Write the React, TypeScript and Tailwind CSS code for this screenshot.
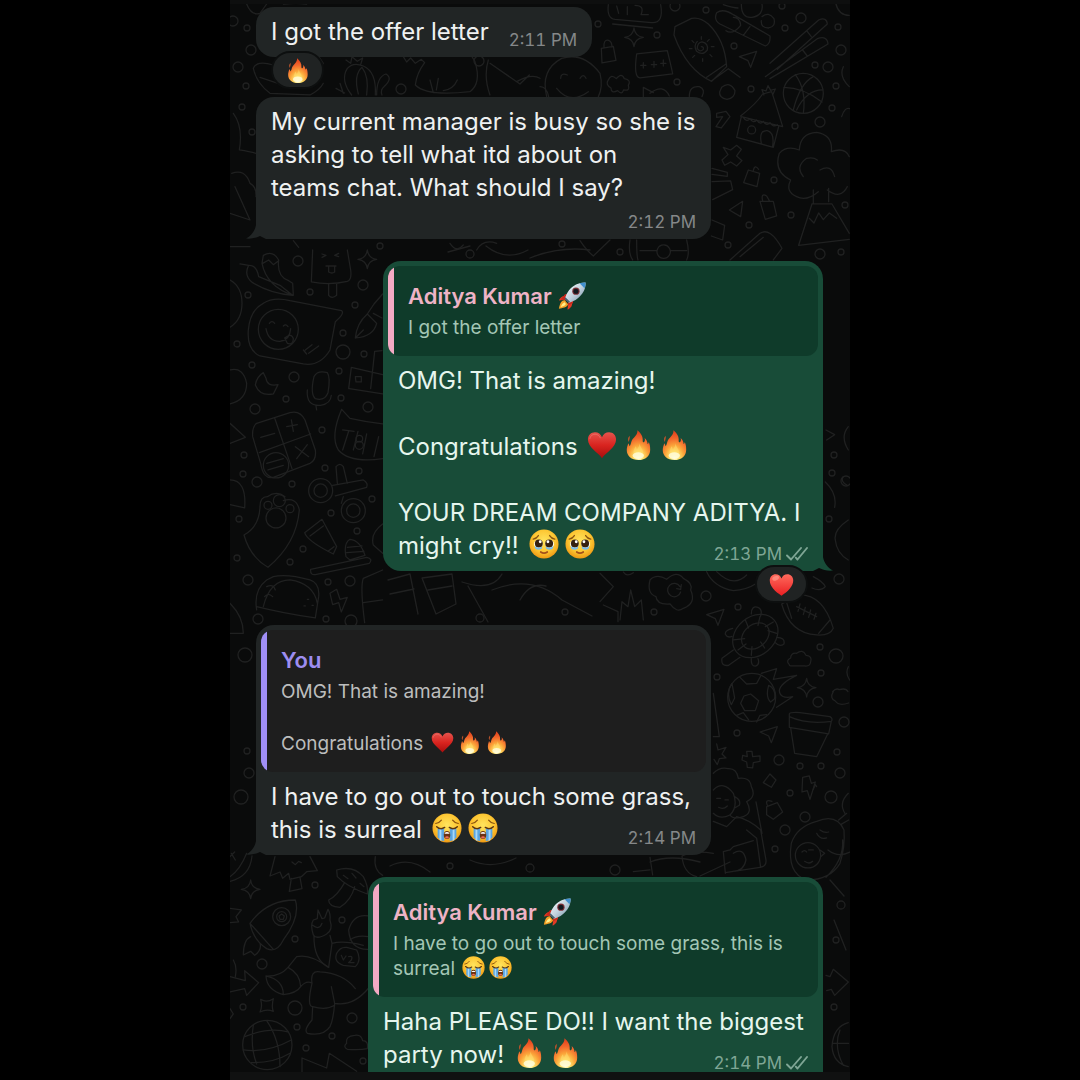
import React from "react";

type EmojiName = "fire" | "heart" | "redheart" | "rocket" | "plead" | "cry";

const LABELS: Record<EmojiName, string> = {
  fire: "fire",
  heart: "heart suit",
  redheart: "red heart",
  rocket: "rocket",
  plead: "pleading face",
  cry: "loudly crying face",
};

function Gradients() {
  return (
    <svg className="absolute h-0 w-0" aria-hidden="true">
      <defs>
        <radialGradient id="flame" cx="0.5" cy="0.92" r="0.85">
          <stop offset="0" stopColor="#fffbd0" />
          <stop offset="0.22" stopColor="#ffe36b" />
          <stop offset="0.48" stopColor="#fba63a" />
          <stop offset="0.75" stopColor="#f2682c" />
          <stop offset="1" stopColor="#e2451f" />
        </radialGradient>
        <linearGradient id="suit" x1="0" y1="0" x2="0" y2="1">
          <stop offset="0" stopColor="#e5534c" />
          <stop offset="0.5" stopColor="#d9241f" />
          <stop offset="1" stopColor="#a80d0d" />
        </linearGradient>
        <linearGradient id="love" x1="0" y1="0" x2="0" y2="1">
          <stop offset="0" stopColor="#ff6a5c" />
          <stop offset="1" stopColor="#ea1f22" />
        </linearGradient>
        <radialGradient id="skin" cx="0.5" cy="0.4" r="0.62">
          <stop offset="0" stopColor="#ffe45e" />
          <stop offset="0.6" stopColor="#fdc733" />
          <stop offset="1" stopColor="#ee9410" />
        </radialGradient>
        <linearGradient id="hull" x1="0" y1="0" x2="1" y2="1">
          <stop offset="0" stopColor="#ffffff" />
          <stop offset="0.5" stopColor="#c3d3df" />
          <stop offset="1" stopColor="#6f8ba1" />
        </linearGradient>
      </defs>
    </svg>
  );
}

function EmojiArt({ name }: { name: EmojiName }) {
  switch (name) {
    case "fire":
      return (
        <>
          <path
            d="M15.500 0.300C19 3.500 21.500 7 21 11.500C21 13 21.800 13.600 22.600 12.800C23.600 11.800 23.600 10 23 8.600C25.200 10.400 26 12.800 26.200 14.800C27 14.600 27.400 13.800 27.400 12.800C28.700 15 29 18 29 21C29 27.800 24 32 16.500 32S4 27.800 4 21.400C4 18.400 5 16.400 5.600 14C6.400 14.900 6.800 16 7 17.200C8.200 16 8.400 14 9 12.200C10.500 8 15.500 6.500 15.500 0.300z"
            fill="url(#flame)"
          />
          <path d="M7 6.200c-2.200 2.300-2.200 4.900-.7 6.600c0-2.300 1.600-3.700.7-6.600z" fill="#b9532c" />
          <path d="M17.500 14c.5 4 4.600 6.500 3.900 11c-1 3.800-8 4.600-9.800.6c-1.200-3.600 1-5.600 1.600-8.200c1 1.200 1.300 2.100 1.500 3.300c1.500-1.800 2.900-3.700 2.800-6.700z" fill="#ffe070" opacity="0.5" />
          <ellipse cx="16.300" cy="27.300" rx="6" ry="3.600" fill="#fffde0" opacity="0.8" />
        </>
      );
    case "heart":
      return (
        <>
          <path d="M16 30C12 24.500 1 18.500 1 10.200C1 5.500 4.400 2.500 8.500 2.500c3.500 0 6.300 2 7.500 5.300c1.200-3.300 4-5.300 7.500-5.300c4.100 0 7.500 3 7.500 7.700C31 18.500 20 24.500 16 30z" fill="url(#suit)" />
          <path d="M3 9.500c.4-3.200 2.800-5 5.600-5c2.700 0 4.700 1.600 5.700 4.200" fill="none" stroke="#f28a82" strokeWidth="1" opacity="0.5" />
        </>
      );
    case "redheart":
      return (
        <>
          <path d="M16 30.500C8 25 1 18.800 1 11C1 6 4.400 3 8.500 3c3.500 0 6.300 2 7.500 5.300c1.200-3.300 4-5.300 7.500-5.300c4.100 0 7.500 3 7.500 8C31 18.800 24 25 16 30.500z" fill="url(#love)" />
          <ellipse cx="8.500" cy="8" rx="4.500" ry="2.800" fill="#ff9a8c" opacity="0.7" transform="rotate(-25 8.500 8)" />
        </>
      );
    case "rocket":
      return (
        <>
          <path d="M10.500 14.500L5 16.500c-1.500 1-3.600 3-4 4.500l7-.6zM17 22l-1.500 5.600c-1 1.600-3 3.400-4.700 3.900L11.800 25z" fill="#e23a24" />
          <path d="M8 14l8-1.500-7 8.500-6-1zM18 16l-1 8-6 3 .500-6z" fill="#c9281c" />
          <path d="M8 21c-3.500-.6-5.600 2.500-7 9.500c4-.6 9.500-1.400 10.500-5z" fill="#f4a026" />
          <path d="M7.500 23c-2 .6-3.400 3-4.500 5.500c2.600-.5 5-1.300 6-3.300z" fill="#fff08a" />
          <path d="M31.500.5C24 .3 17 3.600 12.600 9.300C10.400 12.200 8.800 15.600 8 19l4.500 4.600c3.500-.7 7-2.500 9.800-4.800C28 14.200 32 8 31.500.5z" fill="url(#hull)" />
          <path d="M31.500.5c-2.500 0-4.600.2-6.800.9l5.600 5.800c.9-2.300 1.300-4.300 1.200-6.700z" fill="#3f8fcd" />
          <circle cx="20.500" cy="10.500" r="4.200" fill="#7c2f35" />
          <circle cx="20.500" cy="10.500" r="2.900" fill="#111820" />
          <path d="M8.500 17.500l5.200 5.200-1.700 1-4.500-4.500z" fill="#47606f" />
        </>
      );
    case "plead":
      return (
        <>
          <circle cx="16" cy="16" r="15.500" fill="url(#skin)" />
          <path d="M4.500 10.800c2.200-.4 4.200-1.700 5.500-3.800M27.500 10.800c-2.200-.4-4.200-1.700-5.500-3.800" fill="none" stroke="#8a5310" strokeWidth="1.400" strokeLinecap="round" />
          <circle cx="10" cy="16" r="4.600" fill="#fff" />
          <circle cx="22" cy="16" r="4.600" fill="#fff" />
          <circle cx="10.500" cy="15.500" r="4.200" fill="#35200f" />
          <circle cx="21.500" cy="15.500" r="4.200" fill="#35200f" />
          <circle cx="12" cy="13.600" r="1.500" fill="#fff" />
          <circle cx="20.200" cy="13.600" r="1.500" fill="#fff" />
          <path d="M6 18.200q4 3.600 8.200.4l-.4 2.200q-4 2.600-7.200 0zM26 18.200q-4 3.600-8.200.4l.4 2.200q4 2.600 7.200 0z" fill="#76bdea" />
          <path d="M12.500 24.500q3.500 2.400 7 0" fill="none" stroke="#a4501a" strokeWidth="1.800" strokeLinecap="round" />
        </>
      );
    case "cry":
      return (
        <>
          <circle cx="16" cy="16" r="15.500" fill="url(#skin)" />
          <path d="M4 11.200c2.500-.4 4.500-1.600 6-3.600M28 11.200c-2.500-.4-4.500-1.600-6-3.600" fill="none" stroke="#8a5310" strokeWidth="1.300" strokeLinecap="round" />
          <path d="M6 16.500h7v13.700q-4-.9-7-4zM19 16.500h7v9.700q-3 3.100-7 4z" fill="#5aa5e2" />
          <path d="M8 17h2v13l-2-1.500zM22 17h2v11.500l-2 1.500z" fill="#a8d8f8" />
          <path d="M5 14.600q4 3.800 8.500.8M27 14.600q-4 3.800-8.500.8" fill="none" stroke="#5a3410" strokeWidth="1.600" strokeLinecap="round" />
          <path d="M12.500 23.500c0-3 1.500-4.300 3.500-4.300s3.500 1.300 3.500 4.300c0 2.800-1.500 4.200-3.500 4.200s-3.500-1.400-3.500-4.200z" fill="#6b3210" />
          <path d="M13.500 21.300q2.500-1.900 5 0v.8h-5z" fill="#fff" />
          <ellipse cx="16" cy="26" rx="2" ry="1.200" fill="#ee6a5a" />
        </>
      );
  }
}

const SIZES = {
  body: "mx-[3px] -mt-1.5 h-[30px] w-[30px]",
  quote: "mx-0.5 -mt-1 h-[23px] w-[23px]",
  name: "h-7 w-7",
  reaction: "h-[25px] w-[25px]",
};

function Emoji({ name, size = "body" }: { name: EmojiName; size?: keyof typeof SIZES }) {
  return (
    <svg viewBox="0 0 32 32" role="img" aria-label={LABELS[name]} className={"inline-block shrink-0 align-middle " + SIZES[size]}>
      <EmojiArt name={name} />
    </svg>
  );
}

function Ticks() {
  return (
    <svg viewBox="0 0 22 14" role="img" aria-label="Delivered" className="h-3.5 w-[22px]" fill="none" stroke="currentColor" strokeWidth="1.900" strokeLinecap="round" strokeLinejoin="round">
      <path d="M1 8.500l4 4L15 1M9.800 10.600l1.700 1.900L21 1" />
    </svg>
  );
}

function Stamp({ time, className, sent }: { time: string; className: string; sent?: boolean }) {
  return (
    <span className={"float-right ml-5 flex h-[18px] items-center gap-1 text-[17px] leading-[18px] tabular-nums " + className}>
      <time>{time}</time>
      {sent && <Ticks />}
    </span>
  );
}

function Quote({ name, mine, children }: { name: React.ReactNode; mine?: boolean; children: React.ReactNode }) {
  return (
    <div className="mx-[5px] overflow-hidden rounded-xl">
      <blockquote className={"border-l-[6px] pt-[15px] pr-4 pb-4 pl-3.5 " + (mine ? "border-[#f4aac4] bg-[#0f3b2a]" : "border-[#a08ff6] bg-[#1e1e1e]")}>
        <p className={"flex items-center gap-1.5 text-[22px] leading-[30px] font-semibold " + (mine ? "text-[#eeb3c6]" : "text-[#9d8df0]")}>{name}</p>
        <div className={"mt-1 text-[19px] leading-[25px] " + (mine ? "text-[#a3c6b5]" : "text-[#bcbdbd]")}>{children}</div>
      </blockquote>
    </div>
  );
}

function Reaction({ name, className }: { name: EmojiName; className: string }) {
  return (
    <button type="button" className={"relative z-10 flex h-[38px] w-[53px] items-center justify-center rounded-full border-2 border-[#0d0f0f] bg-[#202323] " + className}>
      <Emoji name={name} size="reaction" />
    </button>
  );
}

function Tail({ side }: { side: "left" | "right" }) {
  return side === "left" ? (
    <svg viewBox="0 0 30 22" className="absolute bottom-0 -left-2.5 h-[22px] w-[30px]" aria-hidden="true">
      <path d="M10 0V8C9 14 5 19 0 21.500C5 22 10 21 14 19L20 22H30V0z" fill="#212525" />
    </svg>
  ) : (
    <svg viewBox="0 0 30 22" className="absolute -right-2.5 bottom-0 h-[22px] w-[30px]" aria-hidden="true">
      <path d="M20 0V8C21 14 25 19 30 21.500C25 22 20 21 16 19L10 22H0V0z" fill="#184c38" />
    </svg>
  );
}

function Bubble({ mine, tail, className, children }: { mine?: boolean; tail?: boolean; className: string; children: React.ReactNode }) {
  return (
    <article className={"relative rounded-[18px] " + (mine ? "ml-auto bg-[#184c38] text-[#e6f6ee] " : "bg-[#212525] text-[#eff1f1] ") + className}>
      {tail && <Tail side={mine ? "right" : "left"} />}
      {children}
    </article>
  );
}

function Text({ className = "", children }: { className?: string; children: React.ReactNode }) {
  return <div className={"relative flow-root px-[15px] pt-2 text-2xl leading-[33px] " + className}>{children}</div>;
}

const STAR = "M0-28Q3-3 28 0Q3 3 0 28Q-3 3-28 0Q-3-3 0-28z";
const BOLT = "M-18-30L2-34L8-12L20-16L4 36L-4 10L-20 14z";
const PLANE = "M26-22L8 26L0 6L-26-6z";
const CLOUD = "M-30 18q-12-12 4-20q0-16 18-14q18-14 28 6q20 2 14 20q-2 14-18 12h-38q-8 0-8-4z";

// Small rings scattered between the larger doodles: x, y, radius.
const RINGS: number[][] = [
  [17, 28, 3], [21, 50, 5], [8, 67, 5], [16, 86, 3], [12, 107, 3], [171, 89, 5], [249, 61, 5], [3, 21, 5], [22, 132, 3],
  [368, 24, 3], [445, 6, 5], [476, 10, 3], [427, 35, 3], [447, 82, 3], [521, 89, 3], [555, 28, 3], [552, 6, 3], [571, 18, 5],
  [504, 46, 3], [608, 27, 3], [611, 50, 5], [598, 67, 5], [585, 65, 3], [606, 86, 3], [602, 108, 3], [590, 122, 5], [565, 126, 3],
  [544, 180, 3], [561, 215, 3], [519, 225, 3], [332, 244, 3], [498, 245, 3], [590, 254, 5], [615, 205, 3], [611, 252, 3],
  [68, 261, 5], [133, 285, 5], [80, 292, 3], [125, 305, 3], [18, 295, 3], [113, 333, 3], [113, 352, 7], [134, 354, 3], [7, 344, 3],
  [64, 377, 5], [109, 371, 3], [22, 365, 3], [56, 399, 3], [25, 409, 5], [111, 398, 3], [138, 407, 5], [92, 430, 3], [14, 455, 3],
  [27, 482, 5], [13, 474, 3], [95, 468, 3], [129, 471, 3], [62, 484, 3], [101, 513, 3], [142, 499, 3], [127, 531, 3], [73, 549, 3],
  [9, 519, 3], [60, 562, 3], [7, 558, 3], [18, 580, 5], [98, 582, 3], [120, 581, 5], [28, 619, 5], [96, 619, 3], [121, 621, 6],
  [604, 455, 3], [602, 473, 3], [616, 481, 5], [599, 519, 3], [609, 579, 5], [476, 596, 5], [508, 607, 3], [424, 612, 3], [590, 647, 3],
  [606, 656, 7], [487, 677, 3], [591, 673, 3], [588, 702, 5], [614, 722, 5], [507, 733, 3], [549, 760, 5], [570, 766, 3], [591, 766, 3],
  [607, 752, 3], [610, 773, 5], [560, 793, 3], [601, 797, 6], [575, 817, 5], [555, 830, 5], [545, 849, 3], [385, 870, 5],
  [15, 655, 7], [17, 751, 3], [19, 773, 5], [11, 797, 7], [85, 885, 3], [112, 920, 3], [65, 939, 3], [32, 964, 5], [13, 1007, 3],
  [65, 1008, 7], [67, 1027, 3], [122, 1018, 5], [102, 1036, 3], [76, 1048, 3], [133, 1061, 3], [604, 1007, 3], [611, 905, 4], [606, 940, 3],
  [300, 868, 4], [220, 866, 3], [250, 618, 4], [335, 612, 3], [150, 246, 3], [240, 254, 4], [390, 252, 3],
];

function Wallpaper() {
  return (
    <svg
      viewBox="0 0 620 1080"
      className="pointer-events-none absolute top-0 left-0 h-[1080px] w-[620px]"
      fill="none"
      stroke="#202121"
      strokeWidth="1.300"
      strokeLinecap="round"
      strokeLinejoin="round"
      aria-hidden="true"
    >
      {RINGS.map(([x, y, r]) => (
        <circle key={x + "-" + y} cx={x} cy={y} r={r} />
      ))}

      <g transform="scale(0.3333)" strokeWidth="3.800">
        <path d="M50 12Q64 48 90 40L110 12M160 12Q200 8 230 12" />
        <path d="M130 195Q80 180 70 205Q80 250 120 280L240 285Q270 270 280 250M90 232L180 262M260 160l20 30-16 20" />
        <path d="M365 285Q330 240 352 205Q370 185 400 198Q440 215 436 285M385 282Q370 225 396 202Q418 230 410 285M348 180l14 10 4-20 16 14 16-10-6 20M440 285Q440 230 468 222Q490 235 462 260Q450 270 456 285M318 265l26 14M330 250l10 30" />
        <path d="M520 170l10 16 12-12 14 16 18-12 10 10Q560 220 556 255Q590 290 720 275Q755 250 735 185L720 160M600 240l10 38M625 235l-6 35M640 272q30-4 42-32" />
        <path d="M775 180Q760 230 780 285M780 190L870 252L898 225M860 245Q905 220 930 235M10 340Q40 380 28 450Q60 455 78 460M5 520Q45 505 60 550Q80 560 78 590M15 560L60 660L0 640" />
        <path d="M0 740H60M190 722l16 20M660 730Q680 760 700 735M740 750q20-34 60-20" />
      </g>

      <g transform="translate(310 0) scale(0.3333)" strokeWidth="3.800">
        <path d="M205 14Q200 55 225 58L335 68Q372 70 362 14M230 18l6 22M262 20v24M285 16q30 0 18 28h22M218 72l120 12" />
        <path transform="translate(282 112)" d={STAR} />
        <path d="M184 145l36-6 8 42-42 8zM192 143q-2-26 14-22q10 4 10 20M290 162l92-10q16 66 16 70l-98 12q-20-2-10-72zM302 196h16M310 188v16M334 194h16M342 184v18M362 190h16M370 180v18" />
        <path d="M405 80L455 55Q480 50 505 72Q555 120 560 200L515 244Q440 210 402 105zM500 232L558 192M515 242L565 206L600 232M545 262q25-20 40 10q0 22-24 26q-24-4-22-22z" />
        <path d="M484 140q8 0 6 8q-10 10-18-2q0-18 14-20q20 4 16 24q-14 18-32 4q-10-18 2-30M484 110v8M456 122l6 6M448 146h8M458 172l6-6M488 176v8M510 164l6 6M514 140h8M508 118l-6 6" />
        <path d="M530 38Q550 24 580 44L690 108Q692 132 676 138L540 72Q520 60 530 38zM580 52q20 0 22 24q-24 30-44 16M630 80l-20 26M550 14q30 10 44 10M604 12q0 44 32 40q36-6 30-40M666 50q20-16 36 6q6 24-16 28q-24 0-22-22" />
        <path transform="translate(624 176)" d={PLANE} />
        <path d="M690 190L836 60Q860 50 862 72L712 208M676 230L832 116Q862 106 864 132L690 236M800 92l14 18M788 150l14 18" />
        <path d="M102 335Q98 345 100 355M20 290Q0 210 65 175Q130 155 180 220Q190 260 175 290M62 235q0-18 20-10M120 235q10-16 18 0M50 265q40 50 95 10M0 260q20 0 26 30M310 290V262l30 16M330 280q40-30 58 8M448 290q0-34 30-30q20 8 8 30" />
        <path d="M205 240q8-20 24-4q16-20 24 0q22 4 12 20q6 18-14 14q-6 16-18 2q-20 10-20-8q-18-10-8-24z" />
        <circle cx="790" cy="280" r="60" />
        <path d="M732 262Q790 262 846 306M766 224Q800 270 790 340M820 230Q780 250 760 330M848 270Q800 270 770 330" />
        <path d="M602 348Q650 310 668 282L695 275Q710 320 728 380L604 350L590 412L700 442L716 380M610 352q10 16 20 4q10 16 20 4q10 16 20 4q10 16 20 4q10 16 22 6M664 430q-8-40 18-38q22 6 16 46M672 285l-6-16 12 4 6-16 8 14 14-4-8 18" />
        <circle cx="635" cy="390" r="12" />
        <path d="M530 340l28-6 12 16-26 34-16-4 20-30-18 2zM550 442l22 8 18-14 14 12-14 20 16 14-16 16-18-12-18 10-8-16 18-16zM625 510l34 10-8 40-40-12zM640 512q4-20 16-4M568 630l40-26-6 46zM660 604l40 0 10 44-34 10zM668 602q-6-24 12-14l8 14" />
        <path d="M835 575Q800 605 770 590Q735 575 752 540Q700 515 718 460Q740 435 778 450Q780 400 830 397Q880 405 874 455Q915 440 928 470M790 530Q765 500 800 475Q820 470 832 480M840 510q34-20 44 20M820 570v40M866 565v40M922 560q-20 40-60 10M816 612h60L928 700M816 612L776 736L928 718M808 655l14 14 14-30 14 20 18-20 22 16" />
        <path d="M516 505l46 12v12l-46-6M516 545l56-2 6 26-60 30M516 660l38 16-6 44-34-12M570 780L660 700Q690 680 726 745L700 780M600 770l70-58M270 720q-6 40 8 60M290 720q0 50 4 60M440 720q10 40 0 60M370 735a20 20 0 1 0 2 0M300 752h50M392 752h48M120 722q20 30 40 46l50-48M910 200q-14 30 18 60M905 350q10-30 24-24M888 12q8 34 40 34" />
      </g>

      <g transform="translate(0 250) scale(0.3333)" strokeWidth="3.800">
        <path d="M30 42l26 4Q80 45 86 80L150 106L188 136Q120 130 68 98Q40 78 56 46M100 16Q130 0 146 30Q140 80 176 92L188 100L190 136Q110 110 96 40zM98 40l18-10 14 14 16-12" />
        <path d="M248 0L244 96Q300 106 352 94Q366 90 362 60L352 0M296 100v36q10 12 24 0v-36M276 12l12 4-12 6M326 10l-12 6 12 4M288 48h30M296 48v18q10 6 18 0v-18" />
        <path transform="translate(412 28)" d={STAR} />
        <path d="M100 160Q130 140 180 152L335 182Q345 190 316 215L300 300Q270 350 220 342L90 318Q50 300 55 240Q60 180 100 160z" />
        <circle cx="145" cy="238" r="60" />
        <path d="M108 236Q115 275 150 274Q180 270 182 236M118 220q8-10 16 0M160 228q8-8 14 2M164 264q20-16 26 2q0 20-18 14zM220 300l10 12M226 300l20-16M236 310l30-22" />
        <path d="M100 368Q80 380 76 405Q90 440 130 432L144 404Q110 410 108 385zM252 380q10-20 40-12q10 14 2 60q-10 26-38 18q-16-14-4-66M232 420q-4 50 40 46q30-4 32-30M258 468l2 12" />
        <path d="M376 264Q380 220 412 192L440 220Q430 260 376 264zM376 264l24-24M412 192l20-30 26-30M430 190l26 14M456 302l-22 2-12 112M364 352l94 22M358 416l100 16M364 352l-8 64M376 380h18v16h-16z" />
        <path d="M80 520L180 488Q210 480 225 510L256 600Q260 630 240 640L130 682Q100 690 92 640L68 560Q66 530 80 520zM134 504L186 656M88 608L242 552M92 562l42-12M170 530l32-6M184 510l6 34M196 590l40 30M232 584l-32 42" />
        <circle cx="138" cy="646" r="38" />
        <path d="M110 640l50-14M114 660l46-14M0 360Q40 350 50 400Q50 450 0 462M0 90Q36 110 36 160Q36 210 0 232M0 520L46 562L0 580M0 690Q50 690 44 774L0 764" />
        <path d="M335 478L360 505Q410 516 458 522M335 478Q300 560 325 600Q360 640 458 626M338 540l34 4M356 544l-18 56M384 544l-14 56M410 552l-12 60M446 560l-14 60" />
        <circle cx="388" cy="566" r="10" /><circle cx="388" cy="586" r="12" />
        <circle cx="272" cy="722" r="36" /><circle cx="272" cy="722" r="20" />
        <circle cx="370" cy="782" r="36" /><circle cx="370" cy="782" r="20" />
        <path d="M308 706L400 690Q416 700 410 712L316 738M322 700L318 650Q330 636 340 650L352 700M340 740l-6 20" />
        <circle cx="138" cy="804" r="30" /><circle cx="148" cy="752" r="18" /><circle cx="114" cy="766" r="12" /><circle cx="180" cy="776" r="12" />
        <path d="M112 740Q90 740 90 770Q88 830 42 855Q60 920 114 952Q200 880 208 780Q200 740 160 752M112 740Q140 720 165 740M224 848L276 808L320 890L310 912L294 904Q230 870 224 848zM294 904l18-14M240 858l40-30M348 920Q340 880 360 868Q390 870 405 916L360 930zM352 892l44-4M350 908l52-4M242 958L410 922Q430 926 418 940L256 974Q240 976 242 958z" />
        <path d="M80 1080Q70 1020 110 990L130 980Q170 970 240 990Q270 1000 266 1040L256 1104Q160 1090 80 1070M100 1070Q120 990 180 990Q250 1000 262 1060M110 1010q20-10 26 10M104 1040q10-14 24 0M232 1048h4M222 1068h4M246 1066h4M300 1030l20-12 10 30 22-6-18 44-8-28-18 6zM458 960L400 985Q390 1010 404 1118M400 1058l58-8M458 822Q420 850 430 885L458 910M0 1060Q40 1100 40 1150H0" />
      </g>

      <g transform="translate(370 420) scale(0.3333)" strokeWidth="3.800">
        <path d="M678 30L704 44L680 60M745 20Q720 50 745 90M676 186Q712 220 704 262M745 300Q700 330 706 360Q710 400 745 420M730 170q-10 14 12 26" />
        <path d="M150 480Q170 460 200 478Q230 450 250 475Q280 490 272 510Q290 550 250 565Q230 580 210 552Q170 555 168 530Q140 520 150 480zM240 500a20 20 0 1 0 2 16M244 494l-2 14-12-2M320 455Q340 500 400 512Q440 510 470 490M350 455q50 50 90 10" />
        <path d="M60 600L66 545L84 560L92 510L104 560L124 540L130 600M0 460L40 500L0 545M10 555l44 20v30M70 456q10 16 30 2" />
        <path transform="translate(346 590)" d={PLANE} />
        <ellipse cx="466" cy="648" rx="74" ry="58" transform="rotate(-40 466 648)" />
        <ellipse cx="466" cy="648" rx="46" ry="34" transform="rotate(-40 466 648)" />
        <path d="M400 660l34-4M414 690l24-18M454 706l2-26M494 684l-12-18M530 640l-26-8M520 606l-24 14M480 590l-6 26M436 600l10 24M454 582q0-26 20-20q14 6 8 26M398 625q-24 6-22 18q6 12 20 6M530 652q26 0 22 20q-14 10-26-4M400 690L366 715Q362 740 386 736L420 712M454 716q-2 24 14 22q12-6 6-22" />
        <path d="M545 552Q570 540 600 525Q670 525 700 625Q690 648 650 645Q570 640 545 552zM560 548L575 595M656 640L690 600M590 560L650 590M600 552l-6 22M616 562l-6 22M632 570l-6 22M648 580l-6 18M640 470q30 16 36 30q-14 16-40 4" />
        <path transform="translate(598 716)" d={CLOUD} />
      </g>

      <g transform="translate(370 620) scale(0.3333)" strokeWidth="3.800">
        <path d="M745 140q-10 20 4 40M340 220L358 350H340" />
        <circle cx="455" cy="232" r="72" />
        <path d="M432 228L452 222L476 242L466 272L434 272L422 250zM420 172l20 20 30-2 12-22M396 190q-20 30-2 64l10-20zM506 196q-10 36 6 50l12-10q4-30-18-40M410 286l20-8 16 22M500 284l-20 2-10 20M484 160L530 146L520 178L590 166Q540 190 538 212Q540 238 578 230L530 262" />
        <path transform="translate(620 203)" d={STAR} />
        <path transform="translate(506 342)" d={PLANE} />
        <path d="M568 282Q570 276 600 278L690 290Q700 296 694 304L686 342L568 322zM568 290Q620 314 694 304M572 324L584 400L650 410L682 344M698 215q10-12 20-6q20-6 26 6M700 215q-12 20 6 28q10 16 40 6" />
        <path d="M350 372l4 18 24-8-12 20 12 12-20 2-6 18-10-16M440 394l16 0 2 16 22-2v16l-20 4-2 16-16-2-2-16-14-6 2-14 14 4zM510 462l18 18-14 22-24-14zM640 508L646 494L650 500" />
        <path transform="translate(626 502)" d={BOLT} />
        <path d="M500 560l32-12 16 28-28 22-20-14zM502 556q-8-20 14-12M340 460Q360 440 384 446Q410 444 415 475Q450 470 454 500Q470 530 440 545Q460 580 430 590Q400 600 390 585" />
        <path d="M340 510Q370 480 400 520Q415 560 390 585Q360 600 340 580M350 535h12M375 540h10M356 562q14 8 26-4M404 530q20 10 14 26l-14 8M340 604L380 620L410 590Q450 600 482 630L498 720Q500 740 480 742L376 758M468 546L486 640M440 630L470 655L482 742M390 690L370 695L376 760M390 690L400 680L460 662M340 700Q280 690 246 708Q250 760 290 770M400 700q30-20 38 20q-6 34-40 34M150 712L158 765M100 755L150 750" />
        <path d="M574 670Q590 620 650 604Q710 580 732 630Q736 680 720 730Q690 780 620 780Q560 760 574 670zM716 600L740 580M722 614L746 600M728 660q4 60-50 112M650 640q10 20 30 14M660 630q14 10 26 6" />
        <circle cx="624" cy="706" r="38" />
        <path d="M606 696q8-8 14 0M626 690h14M614 724q14 10 24 0M660 690l14 10-12 10M745 520q-30 30-10 60" />
      </g>

      <g transform="translate(0 840) scale(0.3333)" strokeWidth="3.800">
        <path d="M66 48Q60 110 0 124M0 110Q30 90 50 40M0 50l14-14M4 40l12 20M135 50L120 108L150 96L158 115L176 100L180 118L214 110L230 95L262 92L240 50M184 115L178 154L216 146L210 112M186 66l10 8 10-10 8 4" />
        <path transform="translate(62 148)" d={STAR} />
        <path d="M320 90Q370 75 400 110Q416 140 412 162Q350 140 322 110zM344 128Q320 170 296 180Q296 200 330 202Q364 180 374 140M340 106l14 10M366 100l12 14M390 130l12 10M436 50Q430 90 458 106" />
        <path d="M60 250Q110 180 196 180Q212 230 160 300Q140 340 110 326Q70 300 60 250zM60 250L130 328M62 290Q40 300 40 345L62 334L74 346Q96 330 90 310" />
        <circle cx="155" cy="230" r="27" /><circle cx="155" cy="230" r="15" />
        <path d="M155 222l8 6-3 10h-10l-3-10zM0 205L34 210L18 230L26 246L0 248M10 360q12 20 6 50M0 410L46 422L44 392L86 428L50 466L44 446L0 456" />
        <path d="M250 285Q240 255 250 240L262 236L264 210L276 236L284 234L294 208Q302 220 300 240Q310 270 290 282Q260 300 250 285M252 286Q250 360 296 382L306 310Q340 300 400 316M300 286L306 310M248 256q20 16 28-6M416 228Q370 220 356 270Q360 330 416 328M360 300q20-16 56-10" />
        <path d="M296 382Q240 340 200 350L174 382Q210 400 212 440Q230 420 246 430Q230 500 248 500L246 540Q220 570 232 580Q280 590 300 560Q310 540 314 490L304 440M248 500q40 12 66-4M246 430Q240 390 270 396Q340 400 376 446M314 490Q370 500 416 444M174 382Q150 410 108 408Q110 450 160 464Q200 460 212 440M108 408Q160 420 160 464M320 340Q330 320 350 322L380 330Q396 360 376 380L340 376Q310 366 320 340zM334 346l6 14 8-12M356 350q14-4 8 10l-8 8h16" />
        <path d="M92 478Q110 490 130 476Q124 500 130 514Q110 506 90 516Q98 500 92 478z" />
        <circle cx="112" cy="615" r="74" />
        <path d="M70 555Q60 620 80 672M110 542Q150 600 150 680M44 590Q120 560 174 576M40 630Q110 640 184 600M64 668Q130 670 180 640M216 696V654L290 684L298 640L380 694M350 610q-4-22 24-24q20-4 24 16q18 0 14 24q-20 4-60 2q-14-8-2-18M0 506l10 16-10 14" />
      </g>

      <g transform="translate(370 960) scale(0.3333)" strokeWidth="3.800">
        <path d="M678 46L690 50L700 28L745 66L704 106L694 88L680 92M745 188Q700 200 696 260Q700 310 745 320M720 210Q700 260 730 316M698 250h48" />
      </g>

      <path d="M158 580l22-6 8 40M160 594l24-5M192 578l30-4 4 30-20 10zM198 590l24-4M232 582q30 10 40-8M238 586l20 36M262 590q40-16 70 10l30 16M290 600q10-18 26-14M160 866q20-10 40 6M240 860q22 10 46-2M420 862q20-8 50 0M470 876l30-14M256 246q20 16 42 4M300 258q30-12 60-8" />
      <path d="M600 880l14 16M598 850q10 8 22 2M604 920l12 30M240 246l-22 6" />
    </svg>
  );
}

export default function App() {
  return (
    <div className="flex min-h-screen justify-center bg-black">
      <Gradients />
      <main className="relative flex w-full max-w-[620px] flex-col overflow-hidden bg-[#0a0b0b] font-['Inter',sans-serif]">
        <Wallpaper />
        <div className="relative h-1 shrink-0 bg-[#0e0f0f]" />
        <section className="relative flex grow flex-col pt-[3px] pr-[27px] pl-[26px]" aria-label="Conversation">
          <Bubble className="w-fit max-w-[455px]">
            <Text className="pb-2">
              I got the offer letter
              <Stamp time="2:11 PM" className="mt-4 text-[#858889]" />
            </Text>
          </Bubble>
          <Reaction name="fire" className="-mt-1.5 ml-[15px]" />

          <Bubble tail className="mt-2 w-full max-w-[455px]">
            <Text className="pb-2">
              My current manager is busy so she is asking to tell what itd about on
              <br />
              teams chat. What should I say?
              <Stamp time="2:12 PM" className="mt-[9px] text-[#858889]" />
            </Text>
          </Bubble>

          <Bubble mine tail className="mt-[22px] w-full max-w-[440px] pt-[5px]">
            <Quote mine name={<>Aditya Kumar <Emoji name="rocket" size="name" /></>}>
              I got the offer letter
            </Quote>
            <Text className="pb-2">
              <p>OMG! That is amazing!</p>
              <p className="mt-[33px]">
                Congratulations <Emoji name="heart" /><Emoji name="fire" /><Emoji name="fire" />
              </p>
              <div className="mt-[33px]">
                YOUR DREAM COMPANY ADITYA. I<br />
                might cry!! <Emoji name="plead" /><Emoji name="plead" />
                <Stamp time="2:13 PM" sent className="mt-4 text-[#7fa695]" />
              </div>
            </Text>
          </Bubble>
          <Reaction name="redheart" className="-mt-1.5 mr-[15px] ml-auto" />

          <Bubble tail className="mt-[22px] w-full max-w-[455px] pt-[5px]">
            <Quote name="You">
              <p>OMG! That is amazing!</p>
              <p className="mt-[27px]">
                Congratulations <Emoji name="heart" size="quote" /><Emoji name="fire" size="quote" /><Emoji name="fire" size="quote" />
              </p>
            </Quote>
            <Text className="pb-2">
              I have to go out to touch some grass,
              <br />
              this is surreal <Emoji name="cry" /><Emoji name="cry" />
              <Stamp time="2:14 PM" className="mt-4 text-[#858889]" />
            </Text>
          </Bubble>

          <Bubble mine className="mt-[22px] w-full max-w-[455px] rounded-b-none pt-[5px]">
            <Quote mine name={<>Aditya Kumar <Emoji name="rocket" size="name" /></>}>
              I have to go out to touch some grass, this is surreal <Emoji name="cry" size="quote" /><Emoji name="cry" size="quote" />
            </Quote>
            <Text>
              Haha PLEASE DO!! I want the biggest
              <br />
              party now! <Emoji name="fire" /><Emoji name="fire" />
              <Stamp time="2:14 PM" sent className="mt-4 text-[#7fa695]" />
            </Text>
          </Bubble>
        </section>
        <div className="relative h-2 shrink-0 bg-[#101111]" />
      </main>
    </div>
  );
}
